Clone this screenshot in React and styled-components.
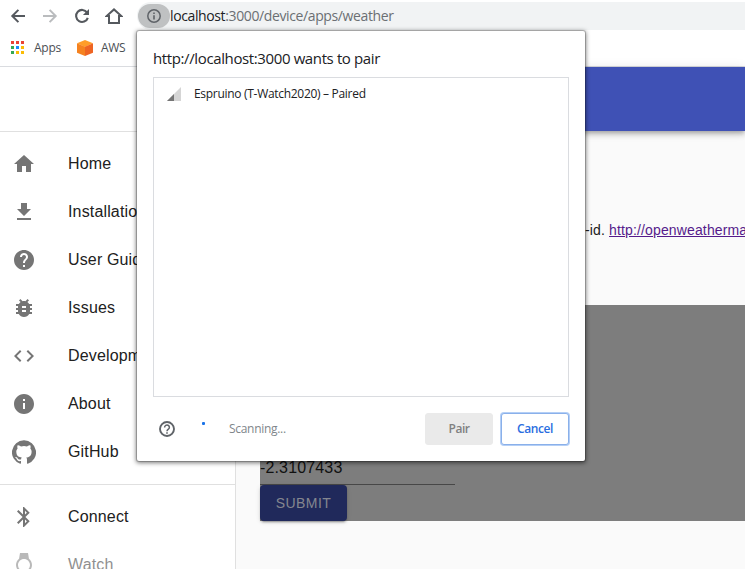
import React from 'react';
import styled, { createGlobalStyle } from 'styled-components';
import {
  MdHome, MdGetApp, MdHelp, MdBugReport, MdCode, MdInfo, MdBluetooth, MdWatch,
} from 'react-icons/md';

const ui = '"Open Sans", "Noto Sans", sans-serif';
const body = '"Liberation Sans", Arial, sans-serif';

const GlobalStyle = createGlobalStyle`
  * { box-sizing: border-box; }
  body { margin: 0; background: #fff; overflow: hidden; }
  svg { display: block; flex: none; }
`;

const Window = styled.div`
  position: relative;
  width: 745px;
  height: 569px;
  overflow: hidden;
  display: flex;
  flex-direction: column;
  background: #fff;
  font-family: ${body};
`;

const Toolbar = styled.header`
  display: flex;
  align-items: center;
  height: 32px;
  flex: none;
  padding-left: 2px;
`;

const ToolButton = styled.span`
  width: 32px;
  height: 32px;
  display: flex;
  align-items: center;
  justify-content: center;
  color: ${(p) => (p.$disabled ? '#babcbe' : '#55595e')};
`;

const AddressBar = styled.div`
  flex: 1;
  height: 28px;
  margin-left: 7px;
  margin-right: -20px;
  padding-left: 1px;
  display: flex;
  align-items: center;
  border-radius: 14px;
  background: #f1f3f4;
`;

const SiteInfo = styled.span`
  width: 32px;
  height: 24px;
  border-radius: 12px;
  background: #bfc1c2;
  color: #5f6368;
  display: flex;
  align-items: center;
  justify-content: center;
`;

const Url = styled.span`
  font: 14px/20px ${ui};
  letter-spacing: -0.38px;
  color: #6b6f73;
  white-space: nowrap;
`;

const Host = styled.span`
  color: #202124;
`;

const Bookmarks = styled.nav`
  display: flex;
  height: 35px;
  flex: none;
  padding: 0 0 3px 11px;
  border-bottom: 1px solid #dadce0;
  align-items: center;
`;

const Bookmark = styled.span`
  display: flex;
  align-items: center;
  gap: ${(p) => p.$gap}px;
  margin-right: 16px;
  font: 12px/16px ${ui};
  letter-spacing: ${(p) => p.$track}px;
  color: #4b4f54;
`;

const Page = styled.div`
  flex: 1;
  min-height: 0;
  display: flex;
`;

const Sidebar = styled.aside`
  width: 236px;
  flex: none;
  border-right: 1px solid #e0e0e0;
  background: #fff;
`;

const SidebarTop = styled.div`
  height: 65px;
  border-bottom: 1px solid #e0e0e0;
`;

const NavList = styled.ul`
  list-style: none;
  margin: 0;
  padding: 8px 0;
  border-bottom: 1px solid #e0e0e0;
`;

const NavItem = styled.li`
  height: 48px;
  display: flex;
  align-items: center;
  gap: 32px;
  padding-left: 12px;
  opacity: ${(p) => (p.$disabled ? 0.5 : 1)};
  color: #757575;
`;

const NavLabel = styled.span`
  font-size: 16px;
  line-height: 24px;
  letter-spacing: 0.15px;
  color: #212121;
`;

const Main = styled.main`
  flex: 1;
  min-width: 0;
  background: #fafafa;
`;

const AppBar = styled.div`
  height: 64px;
  background: #3f51b5;
  box-shadow: 0 2px 4px -1px rgba(0,0,0,.2), 0 4px 5px rgba(0,0,0,.14), 0 1px 10px rgba(0,0,0,.12);
`;

const Content = styled.div`
  padding: 89px 0 0 24px;
`;

const Hint = styled.p`
  margin: 0;
  padding-left: 325px;
  height: 85px;
  font-size: 14px;
  line-height: 20px;
  letter-spacing: 0.14px;
  white-space: nowrap;
  color: #212121;
`;

const HintLink = styled.a`
  color: #551a8b;
  text-decoration: underline;
`;

const Form = styled.form`
  height: 216px;
  display: flex;
  flex-direction: column;
  justify-content: flex-end;
  align-items: flex-start;
  background: #7d7d7d;
`;

const Field = styled.div`
  width: 195px;
  height: 32px;
  padding-top: 4px;
  border-bottom: 1px solid #474747;
  font-size: 16px;
  line-height: 22px;
  letter-spacing: 0.15px;
  color: #111;
`;

const Submit = styled.div`
  width: 87px;
  height: 36px;
  border-radius: 4px;
  background: #20295b;
  color: #84868f;
  font-size: 14px;
  font-weight: 400;
  letter-spacing: 0.45px;
  line-height: 37px;
  text-align: center;
  box-shadow: 0 3px 1px -2px rgba(0,0,0,.2), 0 2px 2px rgba(0,0,0,.14), 0 1px 5px rgba(0,0,0,.12);
`;

const Dialog = styled.section`
  position: absolute;
  left: 137px;
  top: 31px;
  width: 448px;
  height: 430px;
  padding: 17px 16px 15px;
  display: flex;
  flex-direction: column;
  border-radius: 2px;
  background: #fff;
  box-shadow: 0 0 0 1px rgba(0,0,0,.18), 0 1px 4px 1px rgba(0,0,0,.5);
  font-family: ${ui};
`;

const Title = styled.h1`
  margin: 0 0 9px;
  font-size: 15px;
  font-weight: 400;
  line-height: 20px;
  letter-spacing: -0.38px;
  color: #202124;
`;

const DeviceList = styled.div`
  height: 320px;
  border: 1px solid #dadce0;
`;

const Device = styled.div`
  display: flex;
  align-items: center;
  gap: 13px;
  height: 32px;
  padding-left: 13px;
  font-size: 12px;
  line-height: 16px;
  letter-spacing: -0.3px;
  color: #202124;
`;

const Footer = styled.footer`
  display: flex;
  align-items: center;
  height: 34px;
  margin-top: 15px;
  padding-left: 6px;
  color: #5f6368;
`;

const Spinner = styled.span`
  width: 3px;
  height: 3px;
  margin: 0 24px 11px 27px;
  border-radius: 1px;
  background: #1a73e8;
`;

const Status = styled.span`
  flex: 1;
  margin-bottom: 1px;
  font-size: 12px;
  letter-spacing: -0.3px;
  color: #80868b;
`;

const DialogButton = styled.button`
  width: 68px;
  height: 32px;
  margin-left: ${(p) => (p.$primary ? 0 : 8)}px;
  padding: 0;
  border: 1px solid ${(p) => (p.$primary ? '#eaeaea' : '#8ab0ea')};
  border-radius: 3px;
  background: ${(p) => (p.$primary ? '#eaeaea' : '#fff')};
  box-shadow: ${(p) => (p.$primary ? 'none' : '0 0 0 1px #b4cff6')};
  font: 600 12px/16px ${ui};
  letter-spacing: ${(p) => (p.$primary ? -0.5 : -0.4)}px;
  color: ${(p) => (p.$primary ? '#808080' : '#2a6de0')};
`;

const BackArrow = () => (
  <svg width="16" height="16" viewBox="0 0 16 16" fill="none" stroke="currentColor" strokeWidth="2">
    <path d="M15 8H2.6M8.4 1.9 2.3 8l6.1 6.1" />
  </svg>
);

const ForwardArrow = () => (
  <svg width="16" height="16" viewBox="0 0 16 16" fill="none" stroke="currentColor" strokeWidth="2">
    <path d="M1 8h12.4M7.6 1.9 13.7 8l-6.1 6.1" />
  </svg>
);

const Reload = () => (
  <svg width="16" height="16" viewBox="0 0 16 16">
    <path d="M13.1 4.6A6 6 0 1 0 13.8 9.8" fill="none" stroke="currentColor" strokeWidth="2.1" />
    <path d="M15 .9V7H8.9Z" fill="currentColor" />
  </svg>
);

const HomeOutline = () => (
  <svg width="18" height="18" viewBox="0 0 18 18" fill="none" stroke="currentColor" strokeWidth="2">
    <path d="M4 16V9.1H1.6L9 2.4l7.4 6.7H14V16Z" />
  </svg>
);

const InfoOutline = () => (
  <svg width="14" height="14" viewBox="0 0 14 14">
    <circle cx="7" cy="7" r="6.2" fill="none" stroke="currentColor" strokeWidth="1.5" />
    <path d="M6.2 3.5h1.6v1.6H6.2zM6.2 6.2h1.6v4.4H6.2z" fill="currentColor" />
  </svg>
);

const HelpOutline = () => (
  <svg width="16" height="16" viewBox="0 0 16 16" fill="none" stroke="currentColor">
    <circle cx="8" cy="8" r="7" strokeWidth="1.9" />
    <path d="M5.6 6.4a2.4 2.3 0 1 1 3.8 1.8C8.5 8.8 8 9.2 8 10.2" strokeWidth="1.5" />
    <path d="M8 11.2v1.5" strokeWidth="1.6" />
  </svg>
);

const gridColors = ['#ea4335', '#ea4335', '#ea4335', '#34a853', '#1a8cff', '#fbbc05', '#34a853', '#fbbc05', '#fbbc05'];

const AppsGrid = () => (
  <svg width="13" height="13" viewBox="0 0 13 13" shapeRendering="crispEdges">
    {gridColors.map((c, i) => (
      <rect key={i} x={(i % 3) * 5} y={Math.floor(i / 3) * 5} width="3" height="3" fill={c} />
    ))}
  </svg>
);

const Cube = () => (
  <svg width="16" height="16" viewBox="0 0 16 16">
    <path d="M8 0 16 3.2 8 7 0 3.2Z" fill="#ff9d29" />
    <path d="M0 3.2 8 6.7V16L0 12.8Z" fill="#f58220" />
    <path d="M16 3.2 8 6.7V16l8-3.2Z" fill="#ee6423" />
  </svg>
);

const GitHub = () => (
  <svg width="24" height="24" viewBox="0 0 24 24" fill="currentColor">
    <path d="M12 .3a12 12 0 0 0-3.8 23.4c.6.1.8-.3.8-.6v-2c-3.3.7-4-1.6-4-1.6-.6-1.4-1.4-1.8-1.4-1.8-1-.7.1-.7.1-.7 1.2 0 1.9 1.2 1.9 1.2 1 1.8 2.8 1.3 3.5 1 0-.8.4-1.3.7-1.6-2.7-.3-5.5-1.3-5.5-6 0-1.2.5-2.3 1.3-3.1-.2-.4-.6-1.6 0-3.2 0 0 1-.3 3.4 1.2a11.5 11.5 0 0 1 6 0c2.3-1.5 3.3-1.2 3.3-1.2.6 1.6.2 2.8 0 3.2.9.8 1.3 1.9 1.3 3.2 0 4.6-2.8 5.6-5.5 5.9.5.4.9 1 .9 2.2v3.3c0 .3.1.7.8.6A12 12 0 0 0 12 .3" />
  </svg>
);

const Signal = () => (
  <svg width="14" height="14" viewBox="0 0 14 14">
    <path d="M14 0v14H0Z" fill="#d5d5d5" />
    <path d="M7 7v7H0Z" fill="#757575" />
  </svg>
);

const primaryNav = [
  ['Home', MdHome],
  ['Installation', MdGetApp],
  ['User Guide', MdHelp],
  ['Issues', MdBugReport],
  ['Development', MdCode],
  ['About', MdInfo],
  ['GitHub', GitHub],
];

const deviceNav = [
  ['Connect', MdBluetooth, false],
  ['Watch', MdWatch, true],
];

const renderNav = ([label, Icon, disabled]) => (
  <NavItem key={label} $disabled={disabled}>
    <Icon size={24} />
    <NavLabel>{label}</NavLabel>
  </NavItem>
);

export default function App() {
  return (
    <Window>
      <GlobalStyle />
      <Toolbar>
        <ToolButton><BackArrow /></ToolButton>
        <ToolButton $disabled><ForwardArrow /></ToolButton>
        <ToolButton><Reload /></ToolButton>
        <ToolButton><HomeOutline /></ToolButton>
        <AddressBar>
          <SiteInfo><InfoOutline /></SiteInfo>
          <Url><Host>localhost</Host>:3000/device/apps/weather</Url>
        </AddressBar>
      </Toolbar>
      <Bookmarks>
        <Bookmark $gap={10} $track={-0.25}><AppsGrid />Apps</Bookmark>
        <Bookmark $gap={8} $track={-0.3}><Cube />AWS</Bookmark>
      </Bookmarks>
      <Page>
        <Sidebar>
          <SidebarTop />
          <NavList>{primaryNav.map(renderNav)}</NavList>
          <NavList>{deviceNav.map(renderNav)}</NavList>
        </Sidebar>
        <Main>
          <AppBar />
          <Content>
            <Hint>-id. <HintLink>http://openweathermap.org</HintLink></Hint>
            <Form>
              <Field>-2.3107433</Field>
              <Submit>SUBMIT</Submit>
            </Form>
          </Content>
        </Main>
      </Page>
      <Dialog>
        <Title>http://localhost:3000 wants to pair</Title>
        <DeviceList>
          <Device><Signal />Espruino (T-Watch2020) – Paired</Device>
        </DeviceList>
        <Footer>
          <HelpOutline />
          <Spinner />
          <Status>Scanning...</Status>
          <DialogButton $primary>Pair</DialogButton>
          <DialogButton>Cancel</DialogButton>
        </Footer>
      </Dialog>
    </Window>
  );
}
